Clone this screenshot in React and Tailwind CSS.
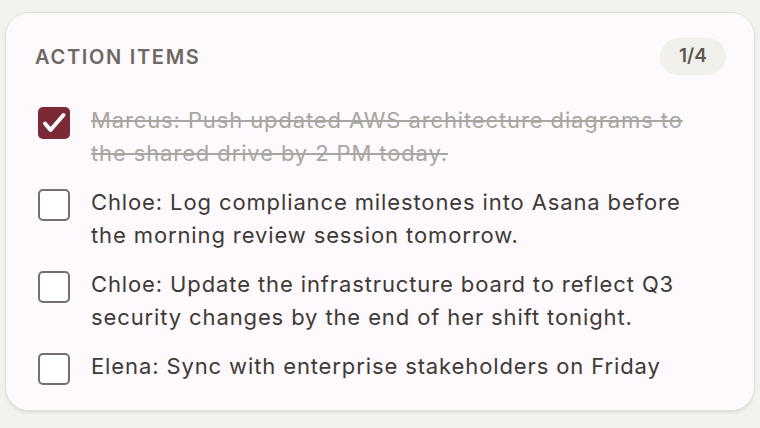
const items = [
  { done: true, text: "Marcus: Push updated AWS architecture diagrams to the shared drive by 2 PM today." },
  { done: false, text: "Chloe: Log compliance milestones into Asana before the morning review session tomorrow." },
  { done: false, text: "Chloe: Update the infrastructure board to reflect Q3 security changes by the end of her shift tonight." },
  { done: false, text: "Elena: Sync with enterprise stakeholders on Friday" },
];

function Checkbox({ checked }) {
  if (checked) {
    return (
      <span className="mt-[3px] flex h-8 w-8 shrink-0 items-center justify-center rounded-[5px] bg-[#7b2937]">
        <svg width="32" height="32" viewBox="0 0 32 32" fill="none">
          <path d="M7 16.5l5.5 6.5L25.5 8" stroke="white" strokeWidth="4" strokeLinecap="round" strokeLinejoin="round" />
        </svg>
      </span>
    );
  }
  return <span className="mt-[3px] h-8 w-8 shrink-0 rounded-[5px] border-2 border-[#727070] bg-white" />;
}

export default function App() {
  return (
    <div className="min-h-[428px] w-[760px] bg-[#f3f2ef] px-[5px] pt-[12px] font-['Inter',sans-serif]">
      <div className="h-[399px] rounded-[24px] border border-[#e4e2df] bg-[#fdf9fc] pl-[29px] pr-[28px] pt-[25px] shadow-[0_2px_3px_rgba(0,0,0,0.08)]">
        <div className="flex items-center justify-between">
          <h2 className="text-[20px] font-semibold uppercase tracking-[0.085em] text-[#6d6862]">Action Items</h2>
          <span className="flex h-[37px] w-[66px] items-center justify-center rounded-full bg-[#f2f0ed] text-[19px] font-semibold text-[#5c5752]">
            1/4
          </span>
        </div>
        <ul className="mt-[29px] flex flex-col gap-[16px]">
          {items.map((it, i) => (
            <li key={i} className="flex items-start gap-[21px] pl-[3px]">
              <Checkbox checked={it.done} />
              <p
                className={
                  it.done
                    ? "max-w-[619px] text-[22px] leading-[33px] tracking-[0.04em] text-[#a9a5a1] line-through decoration-[#a9a5a1] decoration-2"
                    : "max-w-[619px] text-[22px] leading-[33px] tracking-[0.04em] text-[#3e3a36]"
                }
              >
                {it.text}
              </p>
            </li>
          ))}
        </ul>
      </div>
    </div>
  );
}
